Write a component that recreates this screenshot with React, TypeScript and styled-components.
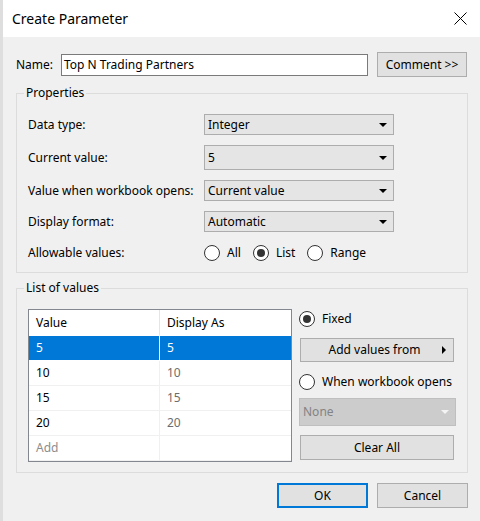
import styled, { createGlobalStyle } from "styled-components"

const GlobalStyle = createGlobalStyle`
  html, body {
    margin: 0;
    padding: 0;
  }
  body {
    width: 480px;
    height: 521px;
    overflow: hidden;
    background: #dedede;
    font-family: "Segoe UI", "Noto Sans", sans-serif;
    font-size: 12px;
    line-height: 16px;
    color: #000;
  }
  * {
    box-sizing: border-box;
  }
`

const Window = styled.div`
  margin-left: 3px;
  width: 477px;
  height: 521px;
  background: #f0f0f0;
  display: flex;
  flex-direction: column;
`

const TitleBar = styled.div`
  height: 37px;
  flex-shrink: 0;
  background: #fff;
  display: flex;
  align-items: center;
  justify-content: space-between;
  padding-left: 9px;
`

const Title = styled.div`
  font-size: 14px;
  line-height: 20px;
`

const CloseButton = styled.div`
  width: 40px;
  height: 37px;
  display: flex;
  align-items: center;
  justify-content: center;
`

const Body = styled.div`
  padding: 15px 12px 0 13px;
  display: flex;
  flex-direction: column;
`

const NameRow = styled.div`
  display: flex;
  align-items: center;
  height: 25px;
`

const NameLabel = styled.span`
  width: 45px;
`

const TextInput = styled.div`
  width: 307px;
  height: 22px;
  border: 1px solid #7a7a7a;
  background: #fff;
  padding-left: 2px;
  display: flex;
  align-items: center;
`

const Button = styled.div<{ $width: number; $height?: number; $default?: boolean }>`
  width: ${(p) => p.$width}px;
  height: ${(p) => p.$height ?? 25}px;
  background: #e1e1e1;
  border: ${(p) => (p.$default ? "2px solid #0078d7" : "1px solid #adadad")};
  display: flex;
  align-items: center;
  justify-content: center;
`

const CommentButton = styled(Button)`
  margin-left: 9px;
`

const Group = styled.fieldset<{ $gap: number; $bottom: number }>`
  margin: ${(p) => p.$gap}px 0 0 0;
  border: 1px solid #dcdcdc;
  padding: 13px 11px ${(p) => p.$bottom}px 11px;
  min-width: 0;
`

const Legend = styled.legend`
  padding: 0 2px;
  margin-left: -4px;
  line-height: 16px;
`

const PropGrid = styled.div`
  display: grid;
  grid-template-columns: 176px 190px;
  row-gap: 10px;
  align-items: center;
`

const Select = styled.div<{ $height?: number; $disabled?: boolean }>`
  height: ${(p) => p.$height ?? 21}px;
  border: 1px solid ${(p) => (p.$disabled ? "#bfbfbf" : "#adadad")};
  background: ${(p) => (p.$disabled ? "#cccccc" : "#e5e5e5")};
  color: ${(p) => (p.$disabled ? "#838383" : "#000")};
  display: flex;
  align-items: center;
  justify-content: space-between;
  padding: 0 6px 0 3px;
`

const DownArrow = styled.span<{ $disabled?: boolean }>`
  width: 0;
  height: 0;
  border-left: 4px solid transparent;
  border-right: 4px solid transparent;
  border-top: 4px solid ${(p) => (p.$disabled ? "#f4f4f4" : "#000")};
`

const RightArrow = styled.span`
  width: 0;
  height: 0;
  border-top: 4px solid transparent;
  border-bottom: 4px solid transparent;
  border-left: 4px solid #000;
  margin-right: 7px;
`

const RadioGroup = styled.div`
  display: flex;
  align-items: center;
  height: 22px;
  gap: 12px;
`

const RadioOption = styled.label<{ $height?: number; $top?: number }>`
  display: flex;
  align-items: center;
  gap: 7px;
  height: ${(p) => p.$height ?? 22}px;
  margin-top: ${(p) => p.$top ?? 0}px;
`

const RadioCircle = styled.span<{ $checked?: boolean }>`
  width: 16px;
  height: 16px;
  border-radius: 50%;
  border: 1px solid #333;
  background: #fff;
  display: flex;
  align-items: center;
  justify-content: center;

  &::after {
    content: "";
    width: 8px;
    height: 8px;
    border-radius: 50%;
    background: ${(p) => (p.$checked ? "#333" : "transparent")};
  }
`

const ListArea = styled.div`
  display: flex;
  align-items: flex-start;
`

const Table = styled.div`
  width: 264px;
  border: 1px solid #828790;
  background: #fff;
`

const TableRow = styled.div<{ $height?: number; $selected?: boolean }>`
  display: grid;
  grid-template-columns: 131px 1fr;
  height: ${(p) => p.$height ?? 25}px;
  background: ${(p) => (p.$selected ? "#0078d7" : "#fff")};
  color: ${(p) => (p.$selected ? "#fff" : "#000")};
`

const Cell = styled.div<{ $muted?: string; $selected?: boolean; $header?: boolean }>`
  display: flex;
  align-items: center;
  padding-left: 7px;
  color: ${(p) => p.$muted ?? "inherit"};
  border-bottom: 1px solid ${(p) => (p.$selected || p.$header ? "#fff" : "#f0f0f0")};

  &:first-child {
    border-right: 1px solid ${(p) => (p.$selected ? "#fff" : p.$header ? "#e5e5e5" : "#f0f0f0")};
  }
`

const SideColumn = styled.div`
  width: 157px;
  margin-left: 7px;
  display: flex;
  flex-direction: column;
`

const SideButton = styled(Button)<{ $top: number }>`
  margin: ${(p) => p.$top}px 0 0 1px;
`

const AddLabel = styled.span`
  flex: 1;
  text-align: center;
  padding-left: 6px;
`

const SideSelect = styled(Select)`
  margin-top: 6px;
`

const Footer = styled.div`
  display: flex;
  justify-content: flex-end;
  gap: 9px;
  margin-top: 10px;
`

const values = ["5", "10", "15", "20"]

function Radio({ label, checked, height, top }: { label: string; checked?: boolean; height?: number; top?: number }) {
  return (
    <RadioOption $height={height} $top={top}>
      <RadioCircle $checked={checked} />
      <span>{label}</span>
    </RadioOption>
  )
}

export default function App() {
  return (
    <>
      <GlobalStyle />
      <Window>
        <TitleBar>
          <Title>Create Parameter</Title>
          <CloseButton>
            <svg width="13" height="13" viewBox="0 0 13 13">
              <path d="M0.5 0.5 L12.5 12.5 M12.5 0.5 L0.5 12.5" stroke="#000" strokeWidth="1" fill="none" />
            </svg>
          </CloseButton>
        </TitleBar>
        <Body>
          <NameRow>
            <NameLabel>Name:</NameLabel>
            <TextInput>Top N Trading Partners</TextInput>
            <CommentButton $width={90}>Comment &gt;&gt;</CommentButton>
          </NameRow>

          <Group $gap={8} $bottom={8}>
            <Legend>Properties</Legend>
            <PropGrid>
              <span>Data type:</span>
              <Select>
                Integer
                <DownArrow />
              </Select>
              <span>Current value:</span>
              <Select $height={25}>
                5
                <DownArrow />
              </Select>
              <span>Value when workbook opens:</span>
              <Select>
                Current value
                <DownArrow />
              </Select>
              <span>Display format:</span>
              <Select>
                Automatic
                <DownArrow />
              </Select>
              <span>Allowable values:</span>
              <RadioGroup>
                <Radio label="All" />
                <Radio label="List" checked />
                <Radio label="Range" />
              </RadioGroup>
            </PropGrid>
          </Group>

          <Group $gap={7} $bottom={10}>
            <Legend>List of values</Legend>
            <ListArea>
              <Table>
                <TableRow $height={26}>
                  <Cell $header>Value</Cell>
                  <Cell $header>Display As</Cell>
                </TableRow>
                {values.map((v, i) => (
                  <TableRow key={v} $selected={i === 0}>
                    <Cell $selected={i === 0}>{v}</Cell>
                    <Cell $selected={i === 0} $muted={i === 0 ? undefined : "#6d6d6d"}>
                      {v}
                    </Cell>
                  </TableRow>
                ))}
                <TableRow>
                  <Cell $muted="#8d8d8d">Add</Cell>
                  <Cell />
                </TableRow>
              </Table>
              <SideColumn>
                <Radio label="Fixed" checked height={20} />
                <SideButton $width={154} $height={24} $top={9}>
                  <AddLabel>Add values from</AddLabel>
                  <RightArrow />
                </SideButton>
                <Radio label="When workbook opens" height={20} top={10} />
                <SideSelect $height={28} $disabled>
                  None
                  <DownArrow $disabled />
                </SideSelect>
                <SideButton $width={154} $top={9}>
                  Clear All
                </SideButton>
              </SideColumn>
            </ListArea>
          </Group>

          <Footer>
            <Button $width={91} $default>
              OK
            </Button>
            <Button $width={91}>Cancel</Button>
          </Footer>
        </Body>
      </Window>
    </>
  )
}
